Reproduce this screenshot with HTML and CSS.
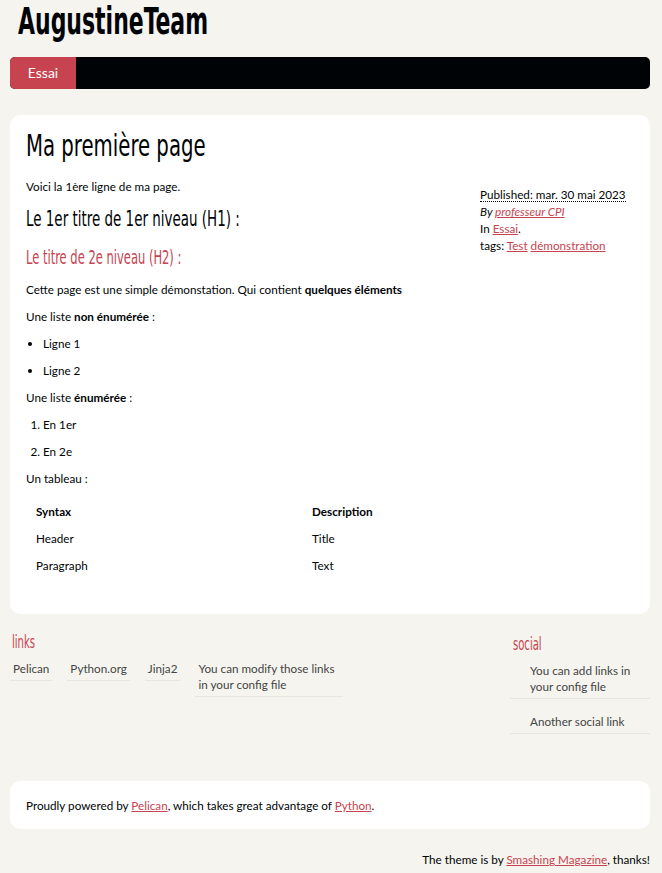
FILE: index.html
```html
<!DOCTYPE html>
<html lang="fr">
<head>
<meta charset="utf-8">
<title>Ma première page</title>
<link rel="stylesheet" href="styles.css">
</head>
<body>
<div class="page">
  <header class="banner">
    <h1 class="site-title"><a href="#">AugustineTeam</a></h1>
    <nav class="menu">
      <ul>
        <li class="active"><a href="#">Essai</a></li>
      </ul>
    </nav>
  </header>

  <section class="card content">
    <h1 class="entry-title">Ma première page</h1>
    <div class="entry">
      <div class="entry-main">
        <p>Voici la 1ère ligne de ma page.</p>
        <h2 class="h-one">Le 1er titre de 1er niveau (H1) :</h2>
        <h3 class="h-two">Le titre de 2e niveau (H2) :</h3>
        <p>Cette page est une simple démonstation. Qui contient <strong>quelques éléments</strong></p>
        <p>Une liste <strong>non énumérée</strong> :</p>
        <ul class="bullets">
          <li>Ligne 1</li>
          <li>Ligne 2</li>
        </ul>
        <p>Une liste <strong>énumérée</strong> :</p>
        <ol class="numbers">
          <li>En 1er</li>
          <li>En 2e</li>
        </ol>
        <p>Un tableau :</p>
        <div class="table">
          <div class="th">Syntax</div><div class="th">Description</div>
          <div class="td">Header</div><div class="td">Title</div>
          <div class="td">Paragraph</div><div class="td">Text</div>
        </div>
      </div>
      <aside class="post-info">
        <div><abbr class="published" title="2023-05-30">Published: mar. 30 mai 2023</abbr></div>
        <div class="author"><em>By <a href="#">professeur CPI</a></em></div>
        <div>In <a href="#">Essai</a>.</div>
        <div>tags: <a href="#">Test</a> <a href="#">démonstration</a></div>
      </aside>
    </div>
  </section>

  <section class="extras">
    <div class="blogroll">
      <h2 class="widget-title">links</h2>
      <ul class="link-list">
        <li><a href="#">Pelican</a></li>
        <li><a href="#">Python.org</a></li>
        <li><a href="#">Jinja2</a></li>
        <li class="wide"><a href="#">You can modify those links in your config file</a></li>
      </ul>
    </div>
    <div class="social">
      <h2 class="widget-title">social</h2>
      <ul class="social-list">
        <li><a href="#">You can add links in your config file</a></li>
        <li><a href="#">Another social link</a></li>
      </ul>
    </div>
  </section>

  <footer class="card contentinfo">
    <p>Proudly powered by <a href="#">Pelican</a>, which takes great advantage of <a href="#">Python</a>.</p>
  </footer>
  <p class="credit">The theme is by <a href="#">Smashing Magazine</a>, thanks!</p>
</div>
</body>
</html>
```

FILE: styles.css
```css
* { box-sizing: border-box; }

body {
  margin: 0;
  padding: 0;
  background: #F5F4EF;
  color: #000305;
  font-family: "Lato", "Liberation Sans", sans-serif;
  font-size: 11.7px;
  line-height: 15px;
}

a { color: #C74350; }

.page {
  width: 640px;
  margin-left: 10px;
}

/* condensed display face (stand-in for Yanone Kaffeesatz) */
.site-title,
.entry-title,
.h-one,
.h-two,
.widget-title {
  font-family: "DejaVu Sans Condensed", "DejaVu Sans", sans-serif;
  font-stretch: condensed;
  font-weight: normal;
  transform-origin: 0 50%;
}

.site-title {
  margin: 0 0 0 8px;
  font-size: 37px;
  line-height: 44px;
  font-weight: bold;
  transform: scaleX(0.66);
}
.site-title a {
  color: #000305;
  text-decoration: none;
}

.menu {
  margin-top: 13px;
  height: 32px;
  background: #000305;
  border-radius: 5px;
}
.menu ul {
  list-style: none;
  margin: 0;
  padding: 0;
  display: flex;
}
.menu li a {
  display: block;
  height: 32px;
  line-height: 32px;
  width: 66px;
  text-align: center;
  color: #fff;
  text-decoration: none;
  font-size: 14px;
}
.menu li.active a {
  background: #C74350;
  border-radius: 5px 0 0 5px;
}

.card {
  background: #fff;
  border-radius: 10px;
}

.content {
  margin-top: 26px;
  padding: 13px 16px 35px 16px;
}

.entry-title {
  margin: 0 0 15px 0;
  font-size: 30px;
  line-height: 36px;
  color: #000305;
  transform: scaleX(0.73);
}

.entry {
  display: flex;
  align-items: flex-start;
}
.entry-main {
  flex: 1;
}

.entry-main p {
  margin: 12px 0;
}
.entry-main > p:first-child { margin-top: 0; }

strong { font-weight: bold; }

.h-one {
  margin: 5px 0 0 0;
  font-size: 22px;
  line-height: 26px;
  color: #000305;
  transform: scaleX(0.68);
}
.h-two {
  margin: 13px 0 13px 0;
  font-size: 20px;
  line-height: 24px;
  color: #C74350;
  transform: scaleX(0.64);
}

.bullets,
.numbers {
  margin: 12px 0;
  padding-left: 17px;
}
.bullets li,
.numbers li {
  margin: 12px 0;
}

.table {
  display: grid;
  grid-template-columns: 276px 1fr;
  margin-top: 12px;
}
.th, .td {
  padding: 6px 10px;
  line-height: 15px;
}
.th { font-weight: bold; }

.post-info {
  width: 154px;
  margin-top: 7px;
  line-height: 17px;
}
.published {
  text-decoration: none;
  border-bottom: 1px dotted #000305;
}

.extras {
  display: flex;
  justify-content: space-between;
  margin-top: 18px;
  min-height: 149px;
}
.widget-title {
  margin: 0 0 0 2px;
  font-size: 18px;
  line-height: 20px;
  color: #C74350;
  transform: scaleX(0.62);
}
.blogroll {
  flex: 1;
}
.link-list {
  list-style: none;
  margin: 8px 0 0 0;
  padding: 0;
  display: flex;
  align-items: flex-start;
  gap: 15px;
}
.link-list li {
  padding: 0 3px 4px 3px;
  line-height: 16px;
  border-bottom: 1px solid #E8E6E0;
}
.link-list li.wide {
  width: 148px;
}
.link-list a,
.social-list a {
  color: #444;
  text-decoration: none;
}

.social {
  width: 140px;
}
.social .widget-title {
  margin-left: 3px;
  margin-top: 2px;
}
.social-list {
  list-style: none;
  margin: -3px 0 0 0;
  padding: 0;
}
.social-list li {
  padding: 11px 0 4px 20px;
  line-height: 16px;
  border-bottom: 1px solid #E8E6E0;
}
.social-list li + li {
  padding-top: 14px;
}

.contentinfo {
  padding: 16px 16px;
}
.contentinfo p {
  margin: 0;
  line-height: 16px;
}

.credit {
  margin: 22px 0 0 0;
  text-align: right;
  line-height: 16px;
}
```
